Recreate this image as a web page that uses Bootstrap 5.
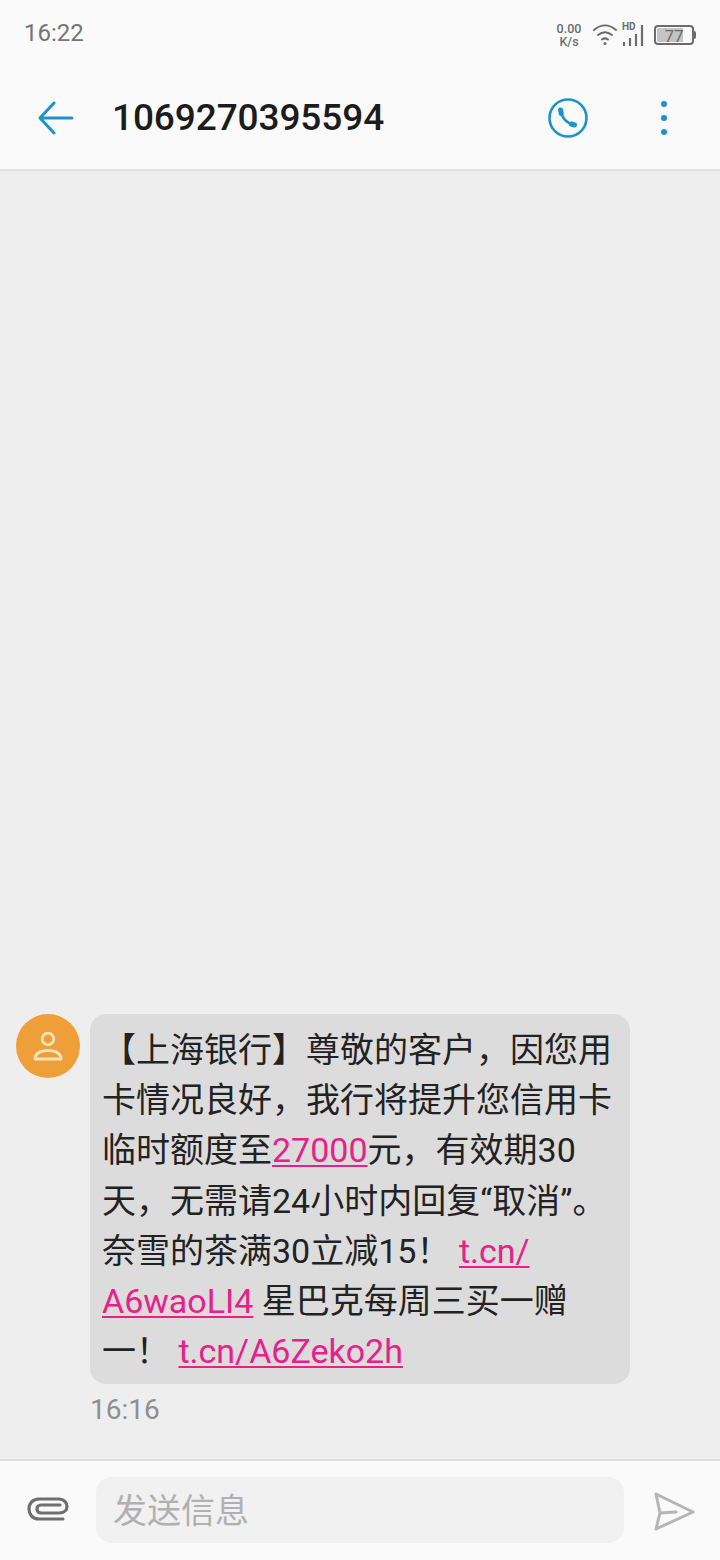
<!doctype html>
<html lang="zh"><head><meta charset="utf-8">
<link href="https://cdn.jsdelivr.net/npm/bootstrap@5.3.0/dist/css/bootstrap.min.css" rel="stylesheet">
<style>
html,body{height:1560px;margin:0}
body{font-family:Roboto,"Noto Sans CJK SC",sans-serif;background:#eee;width:720px;overflow:hidden}
.shell{height:1560px}
.sbar{height:70px;background:#fafafa;color:#757575;padding:0 24px}
.clock{font-size:24px;line-height:1;margin-top:-4px}
.speed{font-size:12.5px;line-height:13px;font-weight:500;text-align:center;color:#6b6b6b;width:30px;margin-left:2px}
.batt{width:40px;height:20px;border:2px solid #6b6b6b;border-radius:4px;font-size:17px;line-height:16px;text-align:center;color:#6b6b6b;background:linear-gradient(90deg,#c4c4c4 76%,transparent 76%);background-clip:content-box;padding:1px}
.bnub{width:2px;height:8px;background:#6b6b6b;border-radius:0 2px 2px 0}
.hd{font-size:10px;line-height:10px;font-weight:700;color:#6b6b6b;position:absolute;left:0;top:-1px}
.sig{position:relative;width:24px;height:24px}
.topb{height:101px;background:#fafafa;border-bottom:2px solid #e2e2e2;padding:0 0 4px 38px}
.num{font-size:37px;font-weight:500;color:#1c1c1c;margin-left:38px;line-height:1;letter-spacing:-.1px}
.feed{padding:0 16px 0}
.avt{width:64px;height:64px;background:#ef9f38;flex:none;margin-right:10px}
.bub{width:540px;height:370px;background:#dcdcdc;border-radius:16px;padding:11px 12px;font-size:34px;line-height:50.2px;color:#222;white-space:nowrap}
.bub a{color:#e6218a;text-decoration:underline;text-underline-offset:3px;text-decoration-thickness:2px}
.stamp{font-size:28px;line-height:1;color:#8f8f8f;margin:12px 0 0 74px;height:35px}
.foot{height:101px;background:#fafafa;border-top:2px solid #dedede;padding:16px 0 0 27px;margin-top:28px}
.inp{width:528px;height:66px;background:#f1f1f1;border-radius:16px;margin-left:27px;padding-left:17px;font-size:34px;line-height:68px;color:#b0b0b0}
.send{margin-left:29px}
</style></head><body>
<div class="shell d-flex flex-column">
<div class="sbar d-flex align-items-center">
 <div class="clock">16:22</div>
 <div class="ms-auto d-flex align-items-center gap-2" style="margin-right:0">
  <div class="speed">0.00<br>K/s</div>
  <svg width="26" height="24" viewBox="0 0 26 24" fill="none" stroke="#6b6b6b" stroke-width="2" stroke-linecap="round"><path d="M2 7C9 1 17 1 24 7M6 12c5-4 9-4 14 0M10 16.500c2-1.500 4-1.500 6 0"/><circle cx="13" cy="20.500" r="1.500" fill="#6b6b6b" stroke="none"/></svg>
  <div class="sig" style="margin-left:-4px"><span class="hd">HD</span>
   <svg width="24" height="24" viewBox="0 0 24 24" fill="none" stroke="#6b6b6b" stroke-width="2.200"><path d="M2 22v-4M8 22v-8M14 22V10M20 22V1"/></svg>
  </div>
  <div class="d-flex align-items-center" style="margin-left:0"><div class="batt">77</div><div class="bnub"></div></div>
 </div>
</div>
<div class="topb d-flex align-items-center">
 <svg width="36" height="36" viewBox="0 0 36 36" fill="none" stroke="#1c93c9" stroke-width="3" stroke-linecap="round" stroke-linejoin="round"><path d="M34 18H3M16 3 2 18l14 15"/></svg>
 <div class="num">1069270395594</div>
 <svg class="ms-auto" width="42" height="42" viewBox="0 0 42 42" fill="none" stroke="#1c93c9" stroke-linecap="round" style="margin-right:-1px"><circle cx="21" cy="21" r="18.500" stroke-width="2.600"/><path d="M14 14.500C14.500 20.500 20 26.500 26.500 27.500" stroke-width="2.600"/><path d="M13.600 13l.6 3.500M27.500 28l-3.200-1" stroke-width="5"/></svg>
 <div class="d-flex flex-column justify-content-between" style="margin:0 53px 0 73px;height:34px;width:6px">
  <i class="d-block rounded-circle" style="width:6px;height:6px;background:#1c93c9"></i><i class="d-block rounded-circle" style="width:6px;height:6px;background:#1c93c9"></i><i class="d-block rounded-circle" style="width:6px;height:6px;background:#1c93c9"></i>
 </div>
</div>
<div class="feed flex-grow-1 d-flex flex-column justify-content-end">
 <div class="d-flex align-items-start">
  <div class="avt rounded-circle d-flex align-items-center justify-content-center">
   <svg width="32" height="32" viewBox="0 0 32 32" fill="none" stroke="#fde3bd" stroke-width="2.800"><circle cx="16" cy="9" r="5.800"/><path d="M3 29c0-1 0-2 .5-3 2-4 7-5.500 12.500-5.500S26.500 22 28.500 26c.5 1 .5 2 .5 3z" stroke-linejoin="round"/></svg>
  </div>
  <div class="bub">【上海银行】尊敬的客户，因您用<br>卡情况良好，我行将提升您信用卡<br>临时额度至<a href="#">27000</a>元，有效期30<br>天，无需请24小时内回复“取消”。<br>奈雪的茶满30立减15！ <a href="#">t.cn/</a><br><a href="#">A6waoLI4</a> 星巴克每周三买一赠<br>一！ <a href="#">t.cn/A6Zeko2h</a></div>
 </div>
 <div class="stamp">16:16</div>
</div>
<div class="foot d-flex align-items-start">
 <svg width="42" height="26" viewBox="0 0 42 26" fill="none" stroke="#6f6f6f" stroke-width="3.200" stroke-linecap="round" style="margin-top:19px"><path d="M36 23H12C5 23 2 18 2 13S5 3 12 3h20c5 0 8 4 8 7.500S37 17 32 17H14c-2.500 0-4-1.800-4-4s1.500-4 4-4h19"/></svg>
 <div class="inp">发送信息</div>
 <svg class="send" width="42" height="42" viewBox="0 0 42 42" fill="none" stroke="#b5b5b5" stroke-width="3" stroke-linejoin="round" stroke-linecap="round" style="margin-top:14px"><path d="M3 3l37 18L3 38l4-16 16-1M7 22 3 3"/></svg>
</div>
</div>
</body></html>
